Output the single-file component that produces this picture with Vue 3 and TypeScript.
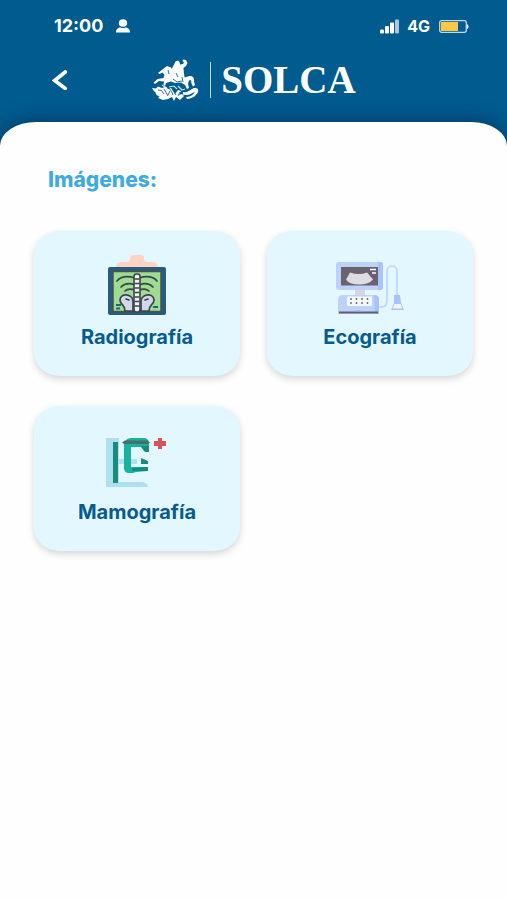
<script setup lang="ts">
type StudyId = 'radiografia' | 'ecografia' | 'mamografia'

interface Study {
  id: StudyId
  label: string
}

const studies: Study[] = [
  { id: 'radiografia', label: 'Radiografía' },
  { id: 'ecografia', label: 'Ecografía' },
  { id: 'mamografia', label: 'Mamografía' },
]
</script>

<template>
  <div class="screen">
    <header class="top">
      <div class="status">
        <span class="status-group">
          <span>12:00</span>
          <svg class="person" viewBox="0 0 14 14" aria-hidden="true">
            <ellipse cx="7" cy="4" rx="4.2" ry="3.8" />
            <path d="M0 13.500c0-3.600 2.300-5 4.700-5 1.500.8 3.100.8 4.600 0 2.400 0 4.700 1.400 4.700 5z" />
          </svg>
        </span>
        <span class="status-group right">
          <svg class="signal" viewBox="0 0 20 15" aria-hidden="true">
            <rect x="0" y="10.500" width="4" height="4" rx="1" />
            <rect x="5" y="7" width="4" height="7.500" rx="1" />
            <rect x="10" y="3.500" width="4" height="11" rx="1" />
            <rect x="15" y="0.500" width="4" height="14" rx="1" fill="#b4c5d3" />
          </svg>
          <span>4G</span>
          <svg class="battery" viewBox="0 0 30 13" aria-hidden="true">
            <rect x="0.700" y="0.700" width="26.600" height="11.600" rx="2" fill="none" stroke="#c5d6e2" stroke-width="1.300" />
            <rect x="2" y="2" width="17" height="9" fill="#fbc944" />
            <path d="M28 4q1.500.5 1.500 2.500T28 9z" />
          </svg>
        </span>
      </div>
      <div class="bar">
        <button class="back" type="button" aria-label="Volver">
          <svg viewBox="0 0 16 20" aria-hidden="true">
            <path d="M13.300 2 2.700 10.500l10.600 8" fill="none" stroke="#fff" stroke-width="3.600" stroke-linecap="round" />
          </svg>
        </button>
        <div class="brand">
          <svg class="emblem" viewBox="0 0 50 42" aria-hidden="true">
            <!-- rider -->
            <path d="M24 3.500c.5-2 3.500-2.500 4.500-.5l.5 2.500 3-.5 1-1.500-1.500-1.500.8-1.500 2.700.5 1.500 3-1.500 3-2.500 2 .5 6 1 5-5 2-5-1-1-7-2.500-3.500 1.500-3z" />
            <!-- horse -->
            <path d="M12 10l4-3 4 1.500 3 5 2 4 9 1 4-1.500c4-.5 5.500 2 5 5.500l1 3.500-2 1.500-1.500-3-.5-3.500-2 .5-1 3.500 1 4-2 1-2-4-4-2.500-6 .5-4-1.500-5 1.500-1 3-1.500-1 .5-3.500-5-.5-4 3-1.500-1.500 4-3.500 6-1 1-3-2-2.500-3 1.500-1.500-1z" />
            <!-- dragon -->
            <path d="M1 29l4 .5 2-2 4 1.500 4-1.500 2 2.500 3-1 4 6 3-4 3 1-2 4 3-1 2 2-4 4-4-3-2 4-2-4-4 2-5 1-5-2 1.500-1.500-3-1.500-1-2.500-2-2z" />
            <path d="M32 33c5 1 8-3 11-4 3-.5 5 1 4 4s-6 7-11 7l-1-2c5 0 8-3 8.500-5-3.500 2-6 4-11.500 2.500z" />
            <g fill="none" stroke="#0c6394" stroke-width="0.900">
              <path d="M17 11l1 4M22 20l4 3 5-1M25 14l2 4M31 18l1 5" />
              <path d="M7 31q4-1 6 4M13 30l4 7M19 32l-2 4M25 36l-2-3M29 33l-2 4M18 29q3 3 4 7" />
            </g>
            <path d="M18 28l5-1 3 3M27 27l4 4 3-1M11 26l3 2" fill="none" stroke="#cfe1ed" stroke-width="1.100" />
          </svg>
          <span class="rule"></span>
          <span class="name">SOLCA</span>
        </div>
      </div>
    </header>

    <main class="sheet">
      <h1>Imágenes:</h1>
      <div class="grid">
        <button v-for="study in studies" :key="study.id" class="card" type="button">
          <svg v-if="study.id === 'radiografia'" class="icon" viewBox="0 0 76 64" aria-hidden="true">
            <path d="M17 17c0-4 2-6 6-6h4c3 0 4-1 4-3 0-3 1-4 3-4h8c2 0 3 1 3 4 0 2 1 3 4 3h4c4 0 6 2 6 6z" fill="#ffd2c1" />
            <rect x="9" y="16" width="58" height="48" rx="2" fill="#285b7c" />
            <rect x="14" y="20.500" width="48" height="40" fill="#9ddc91" stroke="#465352" stroke-width="1.500" />
            <g fill="#d3d7eb" stroke="#3d444c" stroke-width="1.700" stroke-linejoin="round">
              <path d="M34 60V50c-1-8-13-8-13-1 0 5 5 4 5 11z" />
              <path d="M42 60V50c1-8 13-8 13-1 0 5-5 4-5 11z" />
            </g>
            <g fill="none" stroke="#3d444c" stroke-width="1.700" stroke-linecap="round">
              <path d="M18 30c4-5 11-5 18-3M58 30c-4-5-11-5-18-3M22 36c4-4 9-4 14-2M54 36c-4-4-9-4-14-2M26 40c3-3 7-2 10-1M50 40c-3-3-7-2-10-1M27 48l3 1M49 48l-3 1" />
            </g>
            <rect x="35" y="23" width="6" height="38" rx="2.500" fill="#f1f0ef" stroke="#3d444c" stroke-width="1.600" />
            <path d="M35.500 28h5M35.500 32.500h5M35.500 37h5M35.500 41.500h5M35.500 46h5M35.500 50.500h5M35.500 55h5" stroke="#3d444c" stroke-width="1.300" />
            <path d="M17 54h5M17 57.500h4M54 56h5" stroke="#24627c" stroke-width="1.900" />
          </svg>

          <svg v-else-if="study.id === 'ecografia'" class="icon" viewBox="0 0 76 64" aria-hidden="true">
            <path d="M46 56h3c4 0 6-2 6-6V21c0-4 2-6 5-6s5 2 5 6v24" fill="none" stroke="#bbd3fb" stroke-width="1.500" />
            <rect x="23" y="39" width="10" height="6" fill="#d8d5df" />
            <rect x="4" y="11" width="47" height="28" rx="3" fill="#bbd3fb" />
            <path d="M46 11h2q3 0 3 3v22q0 3-3 3h-2z" fill="#a9c2f7" />
            <rect x="9" y="16" width="37" height="18.500" fill="#6b6270" />
            <path d="M18 21.500q9 3 17 0l6 7q-4 5-14 5t-13-5z" fill="#dcdde1" />
            <path d="M38 18.500h6M40 22h4" stroke="#fff" stroke-width="1.300" />
            <path d="M6 63V49q0-5 5-5h31q5 0 5 5v14z" fill="#bbd3fb" />
            <path d="M42 44q5 0 5 5v14h-4z" fill="#a9c2f7" />
            <rect x="15" y="45.500" width="25" height="9.500" rx="1" fill="#f5f7fb" />
            <g fill="#5e6477">
              <circle v-for="n in 8" :key="n" :cx="19 + ((n - 1) % 4) * 5.500" :cy="n > 4 ? 52 : 48" r="0.900" />
            </g>
            <path d="M7 61.500h39" stroke="#675f6c" stroke-width="2.200" />
            <path d="M24 60h5" stroke="#9bb1d5" stroke-width="1.200" />
            <path d="M62 44h6l1 8 3 7H59l3-7z" fill="#a9c2f7" />
            <path d="M62.500 53h6l2 4.500h-10z" fill="#f2f3f7" />
          </svg>

          <svg v-else class="icon" viewBox="0 0 76 64" aria-hidden="true">
            <path d="M7 12h13v21h18v5H20v18h22q6 0 7 5H7z" fill="#afe0f1" />
            <rect x="14" y="16" width="5" height="41" fill="#168b7e" />
            <path d="M25 18c1-4 4-6 8-6h11c4 0 6 2 6 5v8h-5l-3-4H32v20h17v4l-12 1-3 1h-4c-3 0-5-2-5-5z" fill="#16b49f" />
            <path d="M42 20h8v6h-4zM42 32l7 3v3h-7zM33 42l16-1v4H33z" fill="#168b7e" />
            <path d="M23 16.500l3-2h22l3 2-2 1.500H25z" fill="#456f6a" />
            <path d="M59 12h4v3h4v5h-4v3h-4v-3h-4v-5h4z" fill="#dc5057" />
          </svg>
          <span class="label">{{ study.label }}</span>
        </button>
      </div>
    </main>
  </div>
</template>

<style>
body {
  margin: 0;
  background: #fefefe;
}
</style>

<style scoped>
.screen {
  min-height: 100vh;
  display: flex;
  flex-direction: column;
  background: #005b8f;
  font-family: Roboto, "Liberation Sans", sans-serif;
}

.top {
  height: 122px;
  box-sizing: border-box;
  padding-top: 14px;
  color: #fff;
}

.status {
  height: 24px;
  padding: 0 38px 0 54px;
  display: flex;
  align-items: center;
  justify-content: space-between;
  font: 700 18px/24px Inter, Roboto, sans-serif;
}

.status-group {
  display: flex;
  align-items: center;
  gap: 13px;
}

.right {
  gap: 7px;
  font-size: 16px;
}

.status svg,
.emblem {
  fill: #fff;
}

.person {
  width: 14px;
  height: 14px;
}

.signal {
  width: 20px;
  height: 15px;
}

.battery {
  width: 30px;
  height: 13px;
  margin-left: 2px;
}

.bar {
  height: 46px;
  margin-top: 19px;
  padding: 0 44px;
  display: grid;
  grid-template-columns: 32px 1fr 32px;
  align-items: center;
}

.back {
  width: 32px;
  height: 36px;
  padding: 0;
  border: 0;
  background: none;
  display: grid;
  place-items: center;
  cursor: pointer;
}

.back svg {
  width: 16px;
  height: 20px;
}

.brand {
  display: flex;
  align-items: center;
  justify-content: center;
}

.emblem {
  width: 50px;
  height: 42px;
}

.rule {
  width: 1px;
  height: 36px;
  margin: 0 10px 0 9px;
  background: #c5d8e5;
}

.name {
  font: 700 39px/44px "Liberation Serif", serif;
}

.sheet {
  flex: 1;
  padding: 44px 34px 32px;
  border-radius: 36px 36px 0 0 / 24px 24px 0 0;
  background: #fefefe;
  box-shadow: 0 0 20px rgba(0, 20, 50, 0.5);
}

h1 {
  margin: 0 0 37px 14px;
  color: #40abe0;
  font: 800 21px/28px Inter, Roboto, sans-serif;
}

.grid {
  display: grid;
  grid-template-columns: 1fr 1fr;
  gap: 30px 27px;
}

.card {
  min-height: 145px;
  padding: 20px 8px 24px;
  border: 0;
  border-radius: 26px / 23px;
  background: #e2f7ff;
  box-shadow: 0 3px 7px rgba(0, 0, 0, 0.16);
  display: flex;
  flex-direction: column;
  align-items: center;
  cursor: pointer;
}

.icon {
  width: 76px;
  height: 64px;
  overflow: visible;
}

.label {
  margin-top: 10px;
  color: #075b8d;
  font: 700 20px/24px Inter, Roboto, sans-serif;
}
</style>
